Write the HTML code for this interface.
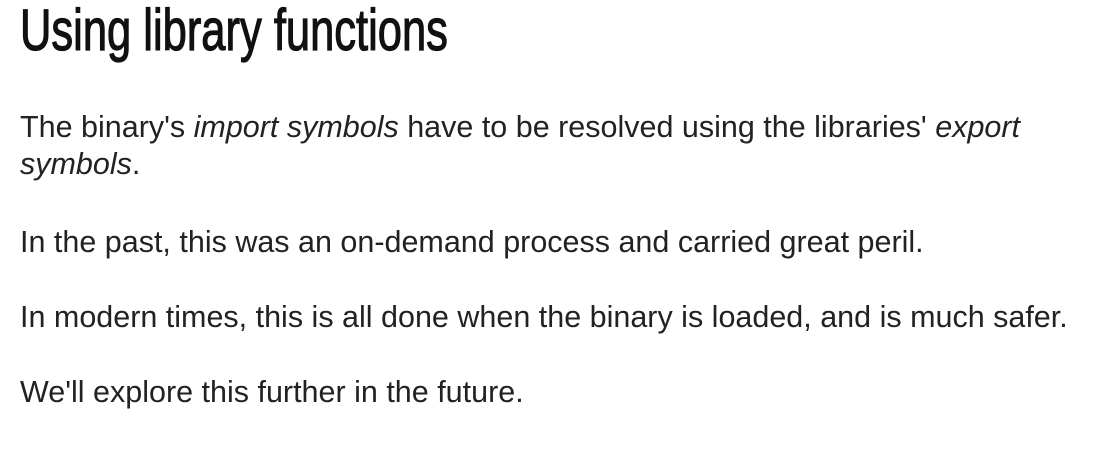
<!DOCTYPE html>
<html><head><meta charset="utf-8"><style>
body{margin:0;background:#fff;width:1109px;height:457px;overflow:hidden;position:relative;color:#111;}
.h{position:absolute;left:20px;top:-4px;font-family:"Liberation Sans",sans-serif;font-size:58px;line-height:70px;transform:scaleX(0.75);transform-origin:0 0;white-space:nowrap;color:#111;-webkit-text-stroke:1.2px #111;}
.l{position:absolute;left:20px;font-family:"Liberation Sans",sans-serif;font-size:30.5px;line-height:37px;white-space:nowrap;color:#222;}
</style></head><body>
<div class="h">Using library functions</div>
<div class="l" style="top:109px">The binary's <i>import symbols</i> have to be resolved using the libraries' <i>export</i></div>
<div class="l" style="top:146px"><i>symbols</i>.</div>
<div class="l" style="top:224px">In the past, this was an on-demand process and carried great peril.</div>
<div class="l" style="top:299px">In modern times, this is all done when the binary is loaded, and is much safer.</div>
<div class="l" style="top:374px">We'll explore this further in the future.</div>
</body></html>
